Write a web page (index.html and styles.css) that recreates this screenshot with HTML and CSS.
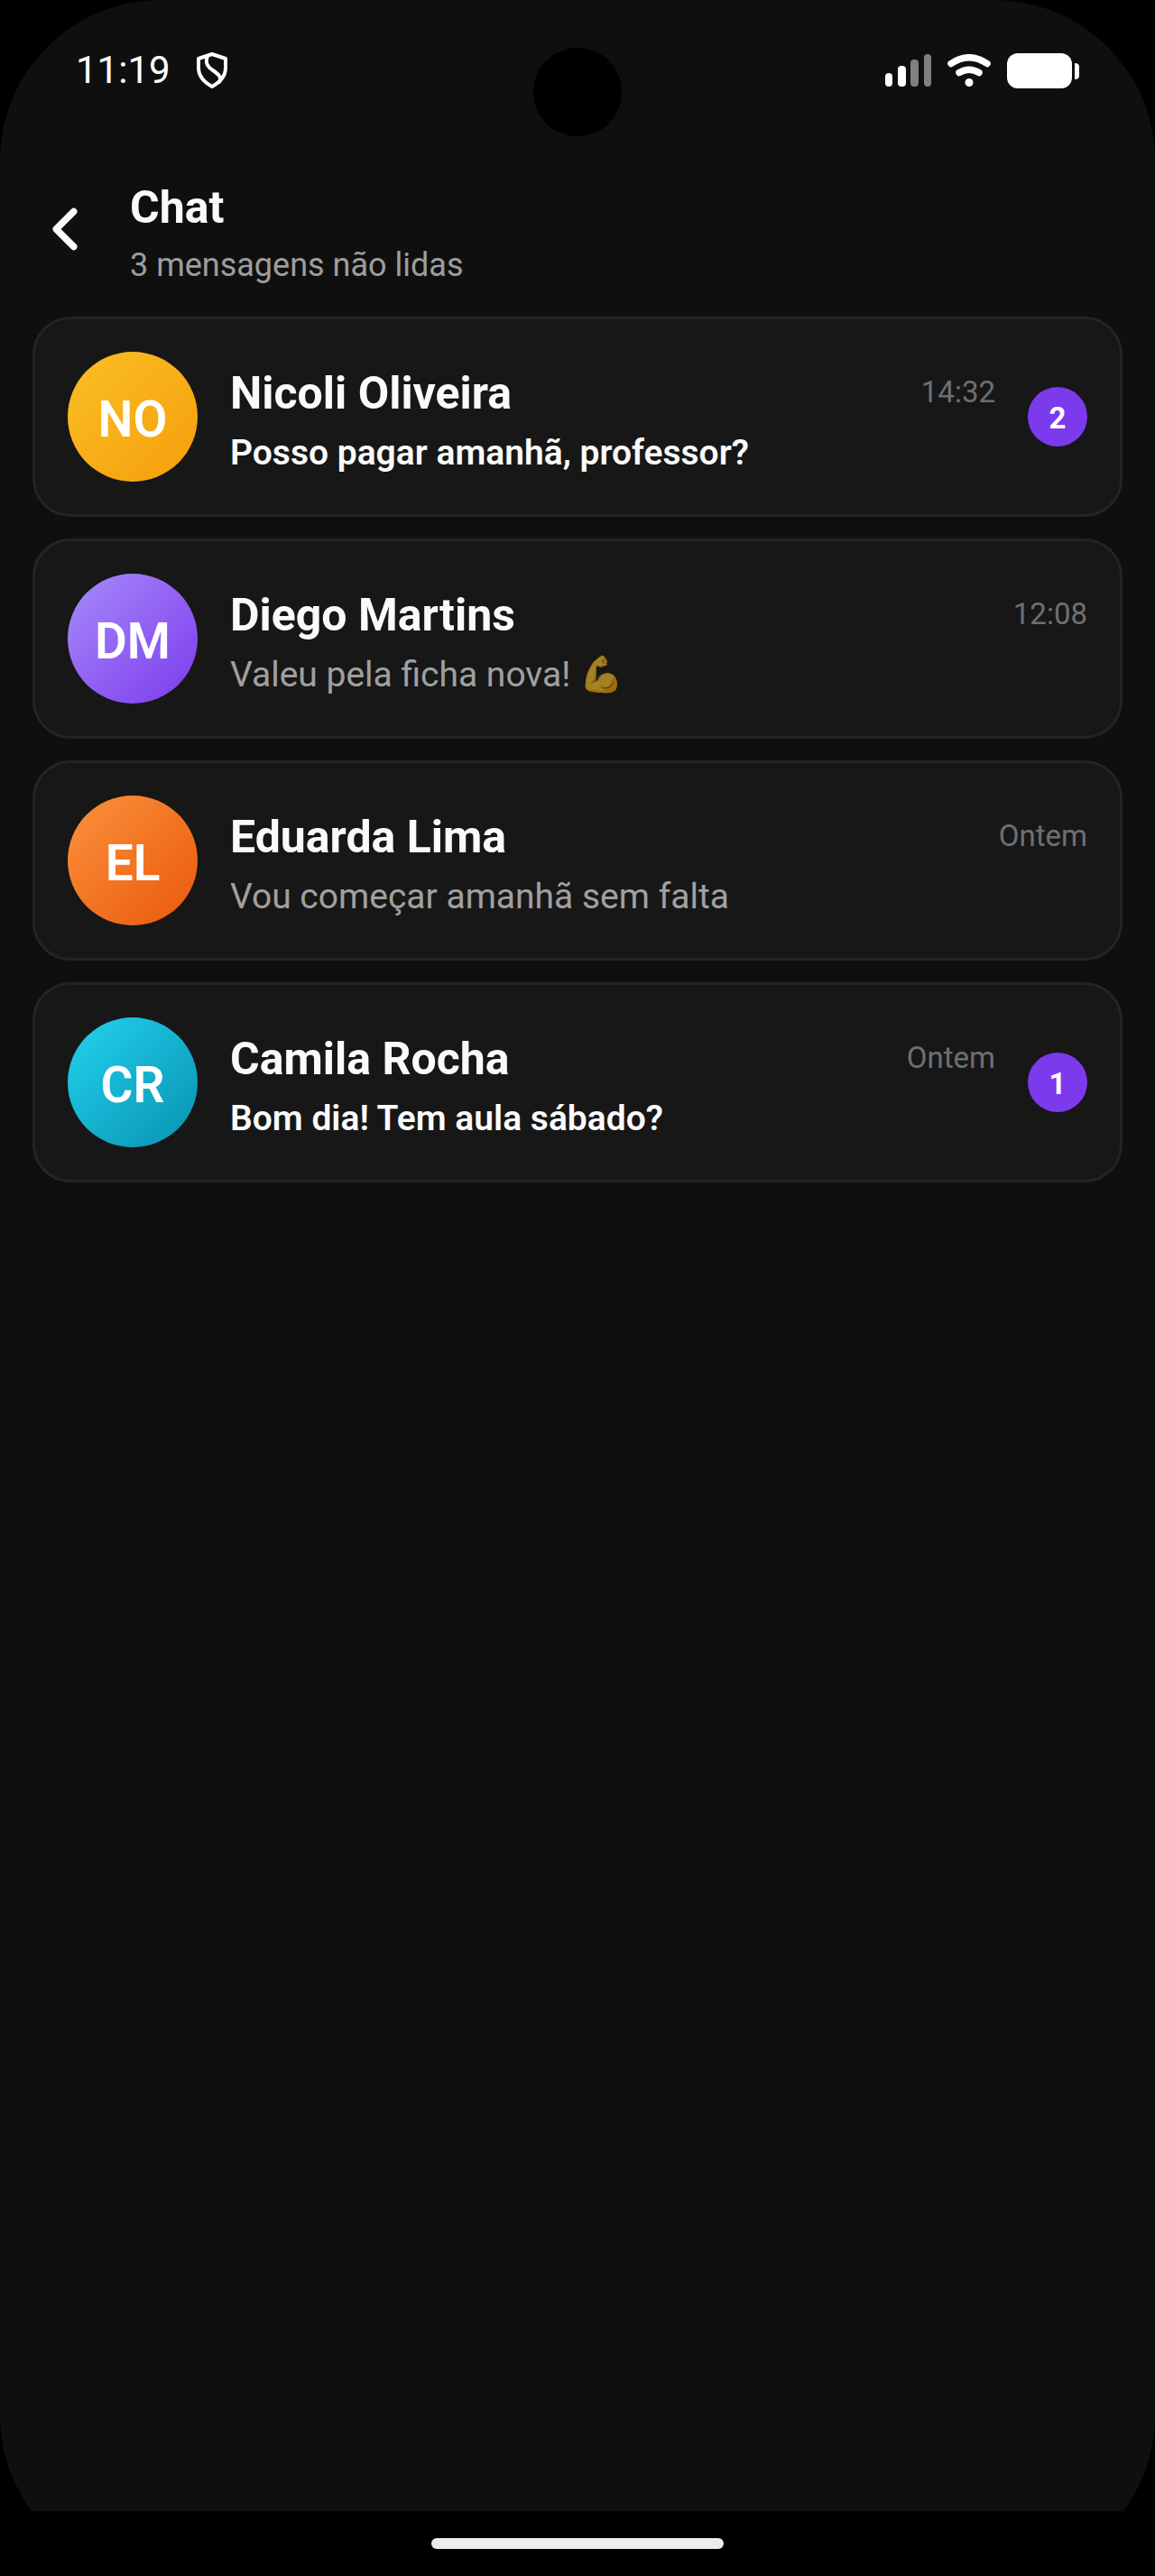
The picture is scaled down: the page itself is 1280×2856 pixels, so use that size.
FILE: index.html
```html
<!DOCTYPE html>
<html lang="pt-BR">
<head>
<meta charset="utf-8">
<meta name="viewport" content="width=device-width, initial-scale=1">
<title>Chat</title>
<link rel="stylesheet" href="styles.css">
</head>
<body>
<div class="screen">
  <div class="camera"></div>
  <div class="status-bar">
    <div class="status-left">
      <span class="clock">11:19</span>
      <svg class="shield" viewBox="0 0 36 42" width="36" height="42" fill="none" stroke="#fff" stroke-width="4" stroke-linejoin="round" stroke-linecap="round" aria-hidden="true">
        <path d="M18 3 L33 8 V18 C33 27 27 34 18 39 C9 34 3 27 3 18 V8 Z"/>
        <path d="M13 5 C10 13 13 17 19 21 C26 26 29 29 26 34"/>
      </svg>
    </div>
    <div class="status-right">
      <svg viewBox="0 0 51 36" width="51" height="36" aria-hidden="true">
        <g fill="#fff"><rect x="0" y="21" width="8" height="15" rx="4"/><rect x="14" y="13" width="9" height="23" rx="4"/></g>
        <g fill="#808080"><rect x="28" y="6" width="9" height="30" rx="4"/><rect x="43" y="0" width="8" height="36" rx="4"/></g>
      </svg>
      <svg viewBox="0 0 48 36" width="48" height="36" fill="none" stroke="#fff" stroke-width="7.500" stroke-linecap="round" aria-hidden="true">
        <path d="M4 10.500 Q24 -3 44 10.500"/>
        <path d="M13 20.500 Q24 14 35 20.500"/>
        <circle cx="24" cy="31.500" r="4.500" fill="#fff" stroke="none"/>
      </svg>
      <svg viewBox="0 0 80 39" width="80" height="39" fill="#fff" aria-hidden="true">
        <rect width="72" height="39" rx="12"/>
        <path d="M75 11 Q80 11 80 15 V25 Q80 29 75 29 Z"/>
      </svg>
    </div>
  </div>

  <header class="header">
    <button class="back" type="button" aria-label="Voltar">
      <svg viewBox="0 0 24 24" width="78" height="78" fill="none" stroke="#fafafa" stroke-width="2.300" stroke-linecap="round" stroke-linejoin="round" aria-hidden="true"><path d="M15 18 9 12l6-6"/></svg>
    </button>
    <div>
      <h1 class="title">Chat</h1>
      <p class="subtitle">3 mensagens não lidas</p>
    </div>
  </header>

  <main class="chats">
    <a class="chat unread" href="#nicoli">
      <span class="avatar amber">NO</span>
      <span class="content">
        <span class="top"><span class="name">Nicoli Oliveira</span><span class="time">14:32</span></span>
        <span class="preview">Posso pagar amanhã, professor?</span>
      </span>
      <span class="badge">2</span>
    </a>
    <a class="chat" href="#diego">
      <span class="avatar violet">DM</span>
      <span class="content">
        <span class="top"><span class="name">Diego Martins</span><span class="time">12:08</span></span>
        <span class="preview">Valeu pela ficha nova! 💪</span>
      </span>
    </a>
    <a class="chat" href="#eduarda">
      <span class="avatar orange">EL</span>
      <span class="content">
        <span class="top"><span class="name">Eduarda Lima</span><span class="time">Ontem</span></span>
        <span class="preview">Vou começar amanhã sem falta</span>
      </span>
    </a>
    <a class="chat unread" href="#camila">
      <span class="avatar cyan">CR</span>
      <span class="content">
        <span class="top"><span class="name">Camila Rocha</span><span class="time">Ontem</span></span>
        <span class="preview">Bom dia! Tem aula sábado?</span>
      </span>
      <span class="badge">1</span>
    </a>
  </main>

  <div class="nav-bar"><div class="handle"></div></div>
</div>
</body>
</html>
```

FILE: styles.css
```css
* {
  box-sizing: border-box;
}

body {
  margin: 0;
  background: #000;
  color: #fafafa;
  font-family: Roboto, "Noto Color Emoji", sans-serif;
}

.screen {
  position: relative;
  display: flex;
  flex-direction: column;
  min-height: 100vh;
  overflow: hidden;
  border-radius: 178px;
  background: #0f0f0f;
}

.camera {
  position: absolute;
  top: 53px;
  left: 50%;
  width: 98px;
  height: 98px;
  margin-left: -49px;
  border-radius: 50%;
  background: #000;
}

.status-bar {
  display: flex;
  align-items: center;
  justify-content: space-between;
  height: 156px;
  padding: 0 84px;
}

.status-left {
  display: flex;
  align-items: center;
  gap: 28px;
}

.status-right {
  display: flex;
  align-items: center;
  gap: 18px;
}

.clock {
  color: #fff;
  font-size: 42px;
  line-height: 48px;
}

.header {
  display: flex;
  align-items: center;
  gap: 33px;
  padding: 38px 33px 29px;
}

.back {
  display: flex;
  padding: 0 0 8px;
  border: 0;
  background: none;
}

.title {
  margin: 0;
  font-size: 50px;
  font-weight: 700;
  line-height: 72px;
}

.subtitle {
  margin: 0;
  color: rgba(255, 255, 255, 0.6);
  font-size: 36px;
  line-height: 56px;
}

.chats {
  display: flex;
  flex: 1;
  flex-direction: column;
  gap: 24px;
  padding: 0 36px 36px;
}

.chat {
  display: flex;
  align-items: center;
  gap: 36px;
  padding: 36px;
  border: 3px solid #242424;
  border-radius: 42px;
  background: #171717;
  color: inherit;
  text-decoration: none;
}

.avatar {
  display: flex;
  flex: none;
  align-items: center;
  justify-content: center;
  width: 144px;
  height: 144px;
  padding-top: 6px;
  border-radius: 50%;
  color: #fff;
  font-size: 55px;
  font-weight: 600;
}

.amber {
  background: linear-gradient(135deg, #fbbf24, #f59e0b);
}

.violet {
  background: linear-gradient(135deg, #a78bfa, #7c3aed);
}

.orange {
  background: linear-gradient(135deg, #fb923c, #ea580c);
}

.cyan {
  background: linear-gradient(135deg, #22d3ee, #0891b2);
}

.content {
  display: flex;
  flex: 1;
  flex-direction: column;
  gap: 6px;
  min-width: 0;
}

.top {
  display: flex;
  align-items: center;
  justify-content: space-between;
}

.name {
  font-size: 50px;
  font-weight: 700;
  line-height: 74px;
}

.time {
  padding-bottom: 4px;
  color: rgba(255, 255, 255, 0.4);
  font-size: 33px;
}

.preview {
  color: rgba(255, 255, 255, 0.6);
  font-size: 39px;
  line-height: 46px;
}

.unread .preview {
  color: #fafafa;
  font-weight: 600;
}

.badge {
  display: flex;
  flex: none;
  align-items: center;
  justify-content: center;
  width: 66px;
  height: 66px;
  padding-top: 3px;
  border-radius: 50%;
  background: #7c3aed;
  color: #fff;
  font-size: 33px;
  font-weight: 700;
}

.nav-bar {
  display: flex;
  align-items: center;
  justify-content: center;
  height: 72px;
  background: #000;
}

.handle {
  width: 324px;
  height: 12px;
  border-radius: 6px;
  background: #ececec;
}
```
